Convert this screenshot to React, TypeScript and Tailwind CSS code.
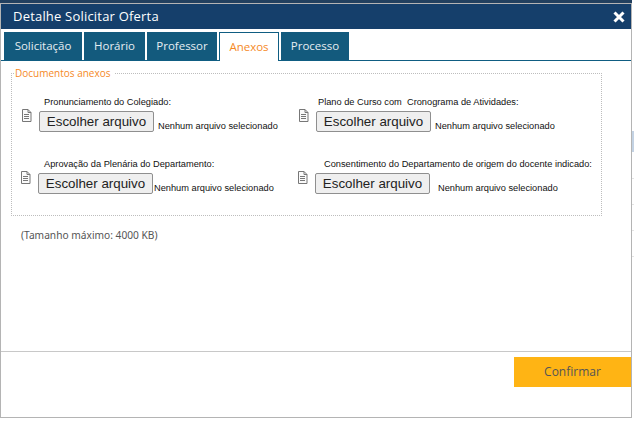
const tabs = [
  { nome: "Solicitação", w: "w-[78px]" },
  { nome: "Horário", w: "w-[61px]" },
  { nome: "Professor", w: "w-[70px]" },
  { nome: "Anexos", w: "w-[60px]" },
  { nome: "Processo", w: "w-[68px]" },
]

function DocIcon() {
  return (
    <svg width="11" height="13" viewBox="0 0 11 13" fill="none" stroke="#777" strokeWidth="1" className="shrink-0">
      <path d="M1.5 .5h5.5l3 3v9h-8.5z" fill="#fafafa" />
      <path d="M7 .5v3h3" />
      <path d="M3 5.5h5M3 7.5h5M3 9.5h5" />
    </svg>
  )
}

function Anexo({ label, labelClass, noneClass }: { label: string; labelClass: string; noneClass: string }) {
  return (
    <div className="flex h-[47px]">
      <div className="pt-[13px] mr-[7px]">
        <DocIcon />
      </div>
      <div>
        <div className={`text-[9.25px] leading-[12px] text-[#111] whitespace-pre font-['Liberation_Sans',sans-serif] ${labelClass}`}>{label}</div>
        <div className="flex items-end mt-[3px]">
          <button className="h-[21px] w-[115px] rounded-[2px] border border-[#8f8f8f] bg-[#efefef] text-[13.33px] leading-[17px] text-[#222] font-['Liberation_Sans',sans-serif]">
            Escolher arquivo
          </button>
          <span className={`text-[9.25px] leading-[12px] text-[#111] whitespace-nowrap font-['Liberation_Sans',sans-serif] ${noneClass}`}>Nenhum arquivo selecionado</span>
        </div>
      </div>
    </div>
  )
}

export default function App() {
  return (
    <div className="w-[634px] h-[421px] bg-white flex font-['Noto_Sans',sans-serif] overflow-hidden">
      <div className="w-[632px] shrink-0">
        <div className="h-[3px] bg-[#22405f]" />
        <div className="h-[415px] border border-[#b4b4b4] flex flex-col">
          {/* Cabeçalho */}
          <div className="h-[25px] shrink-0 bg-[#153f6b] flex items-center justify-between pl-[12px] pr-[6px]">
            <span className="text-[13px] text-white font-['Open_Sans',sans-serif] tracking-[0.2px]">Detalhe Solicitar Oferta</span>
            <svg width="12" height="12" viewBox="0 0 12 12" stroke="#fff" strokeWidth="3">
              <path d="M1.5 1.5l9 9M10.5 1.5l-9 9" />
            </svg>
          </div>

          {/* Abas */}
          <div className="h-[32px] shrink-0 flex items-end gap-[2px] pl-[3px] border-b border-[#0f5d82]">
            {tabs.map((tab) =>
              tab.nome === "Anexos" ? (
                <div key={tab.nome} className={`h-[29px] -mb-[1px] ${tab.w} bg-white border border-b-0 border-[#0f5d82] text-[#f58a1f] text-[11.5px] font-['Open_Sans',sans-serif] flex items-center justify-center`}>
                  {tab.nome}
                </div>
              ) : (
                <div key={tab.nome} className={`h-[28px] ${tab.w} bg-[#135a7d] text-[#e6edf1] text-[11.5px] font-['Open_Sans',sans-serif] flex items-center justify-center`}>
                  {tab.nome}
                </div>
              )
            )}
          </div>

          {/* Conteúdo */}
          <div className="flex-1 px-[10px] pt-[5px]">
            <fieldset className="w-[591px] min-w-0 h-[150px] border border-dotted border-[#bdbdbd] pl-[3px]">
              <legend className="pr-[4px] text-[10px] leading-[14px] text-[#f58a1f] font-['Open_Sans',sans-serif]">Documentos anexos</legend>
              <div className="pl-[5px]">
                <div className="grid grid-cols-[277px_1fr] pt-[16px] ml-[1px]">
                  <Anexo label="Pronunciamento do Colegiado:" labelClass="ml-[5px]" noneClass="ml-[4px]" />
                  <Anexo label="Plano de Curso com  Cronograma de Atividades:" labelClass="ml-[2px]" noneClass="ml-[4px]" />
                </div>
                <div className="grid grid-cols-[277px_1fr] pt-[15px]">
                  <Anexo label="Aprovação da Plenária do Departamento:" labelClass="ml-[6px]" noneClass="ml-[1px]" />
                  <Anexo label="Consentimento do Departamento de origem do docente indicado:" labelClass="ml-[9px]" noneClass="ml-[8px]" />
                </div>
              </div>
            </fieldset>
            <p className="mt-[13px] ml-[10px] text-[10.2px] leading-[12px] text-[#555]">(Tamanho máximo: 4000 KB)</p>
          </div>

          {/* Rodapé */}
          <div className="h-[66px] shrink-0 border-t border-[#c8c8c8] flex justify-end items-start pt-[5px]">
            <button className="w-[117px] h-[30px] bg-[#ffb414] text-[12px] text-[#555] font-['Open_Sans',sans-serif]">Confirmar</button>
          </div>
        </div>
      </div>

      {/* Página por trás do diálogo */}
      <div className="w-[2px] pt-[131px] flex flex-col">
        <div className="h-[21px] bg-[#c3d2e3]" />
        <div className="h-[1px] mt-[26px] bg-[#e4e4e4]" />
        <div className="h-[1px] mt-[25px] bg-[#e4e4e4]" />
        <div className="h-[1px] mt-[25px] bg-[#e4e4e4]" />
        <div className="h-[1px] mt-[25px] bg-[#e4e4e4]" />
      </div>
    </div>
  )
}
